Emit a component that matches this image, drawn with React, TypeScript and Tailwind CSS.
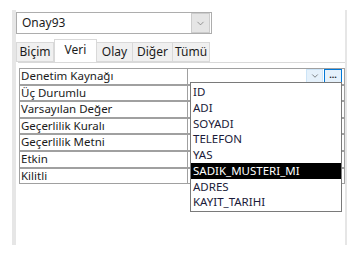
import { ChevronDown } from "lucide-react";

const props = [
  "Denetim Kaynağı",
  "Üç Durumlu",
  "Varsayılan Değer",
  "Geçerlilik Kuralı",
  "Geçerlilik Metni",
  "Etkin",
  "Kilitli",
];

const fields = ["ID", "ADI", "SOYADI", "TELEFON", "YAS", "SADIK_MUSTERI_MI", "ADRES", "KAYIT_TARIHI"];

const tabs = [
  { name: "Biçim", w: "w-[38px]" },
  { name: "Veri", w: "w-[43px]" },
  { name: "Olay", w: "w-[36px]" },
  { name: "Diğer", w: "w-[40px]" },
  { name: "Tümü", w: "w-[37px]" },
];

export default function App() {
  return (
    <div
      className="w-[357px] h-[255px] bg-white pt-[10px] pl-[12px] text-[#1b1b1b]"
      style={{ fontFamily: '"Noto Sans", "Open Sans", sans-serif' }}
    >
      <div className="relative w-[335px] h-[235px] border-l-4 border-r-2 border-[#e6e6e6] pt-[2px]">
        {/* object name combo */}
        <div className="flex items-center w-[196px] h-[22px] border border-[#adadad] bg-white">
          <span className="flex-1 pl-[5px] text-[12px] leading-none">Onay93</span>
          <div className="flex items-center justify-center w-[19px] h-[20px] mr-[1px] bg-[#e5e5e5] border border-[#cccccc]">
            <ChevronDown className="w-[11px] h-[11px] text-[#707070]" strokeWidth={1.5} />
          </div>
        </div>

        {/* tabs */}
        <div className="flex items-end h-[26px] mt-[2px]">
          {tabs.map((t) =>
            t.name === "Veri" ? (
              <div
                key={t.name}
                className={`${t.w} h-[23px] pt-[1px] bg-white border border-b-0 border-[#d9d9d9] text-[12px] flex justify-center items-start`}
              >
                {t.name}
              </div>
            ) : (
              <div
                key={t.name}
                className={`${t.w} h-[20px] bg-[#f0f0f0] border border-l-0 first:border-l border-[#d9d9d9] text-[12px] flex justify-center items-center`}
              >
                {t.name}
              </div>
            )
          )}
        </div>

        {/* tab page */}
        <div className="ml-[2px] border-t border-[#d9d9d9] pt-[5px] pl-[1px]">
          <div className="flex flex-col">
            {props.map((p, i) => (
              <div key={p} className="flex h-[16.6px]">
                <div className="w-[169px] border border-[#a0a0a0] text-[11.5px] leading-[14px] pl-[1px] truncate">
                  {p}
                </div>
                <div className="flex-1 border border-l-0 border-[#a0a0a0] flex justify-end items-stretch pr-[2px]">
                  {i === 0 && (
                    <>
                      <div className="w-[17px] flex items-center justify-center bg-[#e5f1fb] border border-[#cce4f7]">
                        <ChevronDown className="w-[10px] h-[10px] text-[#404040]" strokeWidth={1.5} />
                      </div>
                      <div className="w-[18px] ml-[1px] flex items-center justify-center bg-[#e5f1fb] border border-[#0078d7] text-[9px] font-bold leading-none pb-[3px]">
                        ...
                      </div>
                    </>
                  )}
                </div>
              </div>
            ))}
          </div>
        </div>

        {/* dropdown list */}
        <div className="absolute left-[174px] top-[72px] w-[152px] border border-[#7a7a7a] bg-white py-[1px]">
          {fields.map((f) => (
            <div
              key={f}
              className={
                "h-[15.75px] pl-[2px] text-[11.5px] leading-[15px] " +
                (f === "SADIK_MUSTERI_MI" ? "bg-black text-white" : "text-[#1b1b3a]")
              }
            >
              {f}
            </div>
          ))}
        </div>
      </div>
    </div>
  );
}
